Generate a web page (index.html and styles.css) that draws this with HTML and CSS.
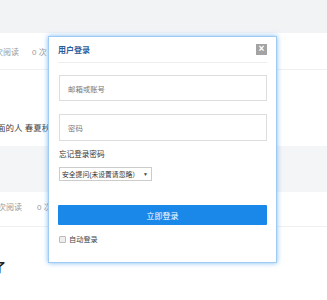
FILE: index.html
```
<!DOCTYPE html>
<html lang="zh-CN">
<head>
    <meta charset="UTF-8">
    <title>用户登录</title>
    <link rel="stylesheet" href="styles.css">
</head>
<body>

    <!-- 背景文章列表 -->
    <div class="topbar"></div>
    <div class="meta-row">
        <span class="meta-read">次阅读</span>
        <span class="meta-count">0 次</span>
    </div>
    <div class="summary">
        <p>面的人 春夏秋冬</p>
    </div>
    <div class="band"></div>
    <div class="meta-row meta-row-2">
        <span class="meta-read">次阅读</span>
        <span class="meta-count">0 次</span>
    </div>
    <div class="post-title">了</div>

    <!-- 登录弹窗 -->
    <div class="modal">
        <div class="modal-head">
            <h3>用户登录</h3>
            <span class="modal-close">×</span>
        </div>
        <div class="modal-body">
            <div class="field">邮箱或账号</div>
            <div class="field field-2">密码</div>
            <p class="forgot">忘记登录密码</p>
            <div class="question">安全提问(未设置请忽略）<span class="arrow">▼</span></div>
            <div class="btn-login">立即登录</div>
            <label class="auto-login"><span class="checkbox"></span>自动登录</label>
        </div>
    </div>

</body>
</html>
```

FILE: styles.css
```
* { margin: 0; padding: 0; box-sizing: border-box; }
body {
    font-family: 'Liberation Sans', 'Noto Sans CJK SC', sans-serif;
    background-color: #fff;
    color: #333;
    width: 327px;
    height: 300px;
    overflow: hidden;
    position: relative;
}

/* 背景页面 */
.topbar { height: 33px; background-color: #f2f3f5; }
.meta-row {
    height: 37px;
    border-bottom: 1px solid #f0f0f0;
    display: flex;
    align-items: center;
    font-size: 8px;
    color: #999;
}
.meta-read { margin-left: -5px; }
.meta-count { margin-left: 13px; }
.summary { height: 76px; padding-top: 52px; font-size: 8.5px; color: #444; }
.summary p { margin-left: -3px; line-height: 12px; }
.band { height: 46px; background-color: #f4f5f6; }
.meta-row-2 { height: 35px; align-items: flex-start; padding-top: 9px; }
.meta-row-2 .meta-read { margin-left: -2px; }
.meta-row-2 .meta-count { margin-left: 15px; }
.post-title { margin-top: 30px; margin-left: -7px; font-size: 13px; font-weight: 700; color: #222; }

/* 登录弹窗 */
.modal {
    position: absolute;
    left: 48px;
    top: 36px;
    width: 229px;
    height: 227px;
    background: #fff;
    border: 1px solid #9fcaf3;
    box-shadow: 0 0 5px rgba(70, 155, 240, 0.7);
    padding: 0 9px;
}
.modal-head {
    height: 26px;
    border-bottom: 1px solid #eee;
    display: flex;
    align-items: center;
    justify-content: space-between;
}
.modal-head h3 { font-size: 8px; font-weight: 700; color: #2d5c9c; }
.modal-close {
    width: 11px;
    height: 11px;
    background-color: #a3a3a3;
    color: #fff;
    font-size: 10px;
    font-weight: 700;
    line-height: 10px;
    text-align: center;
}
.modal-body { padding-top: 12px; }
.field {
    width: 208px;
    height: 26px;
    margin-left: 1px;
    border: 1px solid #ddd;
    padding-left: 8px;
    display: flex;
    align-items: center;
    font-size: 7.4px;
    color: #777;
}
.field-2 { margin-top: 13px; height: 27px; }
.forgot { margin-top: 8px; margin-left: 1px; line-height: 12px; font-size: 7.6px; color: #333; }
.question {
    margin-top: 6px;
    margin-left: 1px;
    width: 93px;
    height: 14px;
    border: 1px solid #ccc;
    padding-left: 2px;
    display: flex;
    align-items: center;
    font-size: 6.8px;
    color: #333;
    white-space: nowrap;
}
.question .arrow { font-size: 5px; margin-left: 4px; color: #444; }
.btn-login {
    margin-top: 24px;
    height: 20px;
    background-color: #1a88e8;
    border-radius: 1px;
    color: #fff;
    font-size: 8px;
    display: flex;
    align-items: center;
    justify-content: center;
}
.auto-login {
    margin-top: 8px;
    margin-left: 1px;
    height: 12px;
    display: flex;
    align-items: center;
    font-size: 7.2px;
    color: #444;
}
.checkbox {
    width: 7px;
    height: 7px;
    border: 1px solid #bbb;
    background-color: #eee;
    border-radius: 1px;
    margin-right: 3px;
}
```
